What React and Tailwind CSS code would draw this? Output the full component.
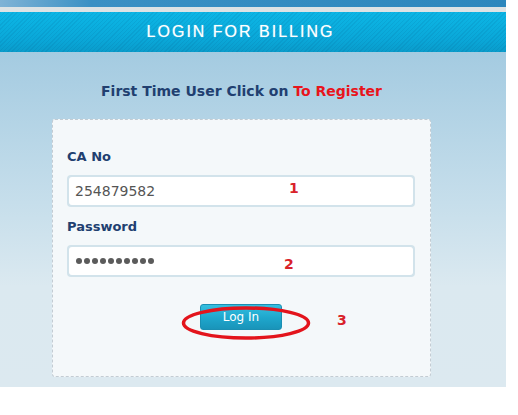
import React from 'react';

const verdana = "font-['Verdana','DejaVu_Sans',sans-serif]";

export default function App() {
  return (
    <div className="w-[518px] h-[415px] bg-white">
      <div className="w-[506px]">
        {/* top strip */}
        <div className="h-[7px] bg-[linear-gradient(to_right,#7fb3d6,#3a90c4_18%,#2d87bd)]" />
        <div className="h-[5px] bg-[#dde3e5]" />

        {/* header */}
        <div className="h-[40px] flex items-center bg-[image:repeating-linear-gradient(135deg,rgba(0,60,110,0.09)_0px,rgba(0,60,110,0.09)_1px,transparent_1px,transparent_3px),linear-gradient(to_bottom,#0cb6e6,#0aa7d8_70%,#0a9ccb)]">
          <div className="w-[481px] text-center text-white text-[16px] tracking-[2px] font-['Liberation_Sans',Arial,sans-serif] [text-shadow:0_0_1px_rgba(255,255,255,0.6)]">
            LOGIN FOR BILLING
          </div>
        </div>

        {/* body */}
        <div className="h-[335px] bg-[linear-gradient(to_bottom,#a4cbe1,#c6deeb_45%,#dbe9f0_70%,#dce9f0)] pl-[52px]">
          <div className="w-[379px] flex flex-col items-center">
            <p className={`${verdana} mt-[31px] text-[14px] font-bold text-[#213f70] leading-[16px]`}>
              First Time User Click on <span className="text-[#e8141c]">To Register</span>
            </p>

            <div className="mt-[20px] w-[379px] h-[258px] border border-dashed border-[#c3ccd3] rounded-[3px] bg-[#f4f8fa] pl-[14px] pr-[15px] pt-[29px]">
              <label className={`${verdana} block text-[13px] font-bold text-[#213f70] leading-[16px]`}>CA No</label>
              <div className="relative mt-[10px] p-[2px] rounded-[4px] bg-[#d2e3eb]">
                <input
                  readOnly
                  value="254879582"
                  className={`${verdana} w-full h-[28px] px-[6px] bg-white rounded-[3px] text-[14px] text-[#555] outline-none`}
                />
                <span className={`${verdana} absolute left-[222px] top-[3px] text-[14px] font-bold text-[#d9222a]`}>1</span>
              </div>

              <label className={`${verdana} block mt-[12px] text-[13px] font-bold text-[#213f70] leading-[16px]`}>Password</label>
              <div className="relative mt-[10px] p-[2px] rounded-[4px] bg-[#d2e3eb]">
                <div className="w-full h-[28px] px-[7px] bg-white rounded-[3px] flex items-center gap-[2px]">
                  {Array.from({ length: 10 }).map((_, i) => (
                    <span key={i} className="w-[6px] h-[6px] rounded-full bg-[#5b5b5b]" />
                  ))}
                </div>
                <span className={`${verdana} absolute left-[217px] top-[9px] text-[14px] font-bold text-[#d9222a]`}>2</span>
              </div>

              <div className="relative mt-[26px] flex justify-center">
                <button
                  type="button"
                  className={`${verdana} w-[82px] h-[26px] mt-[1px] rounded-[3px] text-[12px] text-white border border-[#1a8fb3] bg-[linear-gradient(to_bottom,#34bfe0,#1ea6cc_55%,#1994b9)]`}
                >
                  Log In
                </button>
                <svg className="absolute left-[113px] top-[2px]" width="132" height="36" viewBox="0 0 132 36">
                  <ellipse cx="66" cy="18" rx="62.5" ry="15" fill="none" stroke="#e3141c" strokeWidth="3.5" />
                </svg>
                <span className={`${verdana} absolute left-[270px] top-[7px] text-[14px] font-bold text-[#d9222a]`}>3</span>
              </div>
            </div>
          </div>
        </div>
      </div>
    </div>
  );
}
